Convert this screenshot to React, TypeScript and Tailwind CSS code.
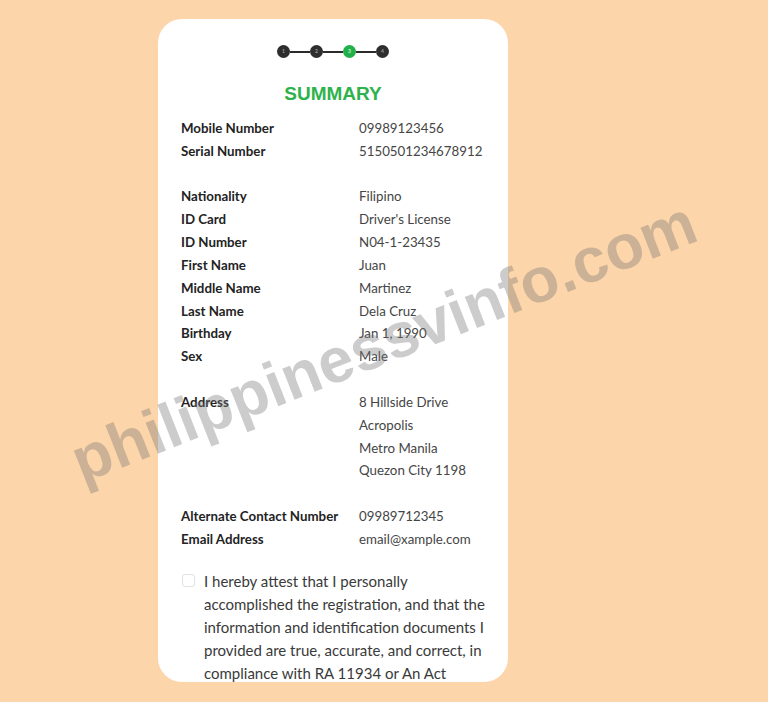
import { Fragment } from "react";

type Row = { label: string; value: string[] };

// blank rows are represented by null
const ROWS: (Row | null)[] = [
  { label: "Mobile Number", value: ["09989123456"] },
  { label: "Serial Number", value: ["5150501234678912"] },
  null,
  { label: "Nationality", value: ["Filipino"] },
  { label: "ID Card", value: ["Driver's License"] },
  { label: "ID Number", value: ["N04-1-23435"] },
  { label: "First Name", value: ["Juan"] },
  { label: "Middle Name", value: ["Martinez"] },
  { label: "Last Name", value: ["Dela Cruz"] },
  { label: "Birthday", value: ["Jan 1, 1990"] },
  { label: "Sex", value: ["Male"] },
  null,
  {
    label: "Address",
    value: ["8 Hillside Drive", "Acropolis", "Metro Manila", "Quezon City 1198"],
  },
  null,
  { label: "Alternate Contact Number", value: ["09989712345"] },
  { label: "Email Address", value: ["email@xample.com"] },
];

function Stepper() {
  const steps = [1, 2, 3, 4];
  return (
    <div className="flex items-center justify-center">
      {steps.map((s, i) => (
        <Fragment key={s}>
          {i > 0 && <div className="w-[20px] h-[2px] bg-[#2b2b2b]" />}
          <div
            className={
              "w-[13px] h-[13px] rounded-full flex items-center justify-center text-[5px] font-bold " +
              (s === 3 ? "bg-[#22b04a] text-[#c9f0d3]" : "bg-[#2e2e2e] text-[#9a9a9a]")
            }
          >
            {s}
          </div>
        </Fragment>
      ))}
    </div>
  );
}

export default function App() {
  return (
    <div
      className="relative h-[702px] w-full overflow-hidden bg-[#fdd5aa] pl-[158px] pt-[19px]"
      style={{ fontFamily: "Lato, 'Open Sans', sans-serif" }}
    >
      {/* Card */}
      <div className="w-[350px] h-[663px] bg-white rounded-[24px] overflow-hidden pt-[26px]">
        <Stepper />
        <h1
          className="mt-[24px] text-center text-[19px] leading-[24px] font-bold text-[#2eb24c]"
          style={{ fontFamily: "'Liberation Sans', Arial, sans-serif" }}
        >
          SUMMARY
        </h1>

        <div className="mt-[11px] pl-[23px] pr-[12px] grid grid-cols-[178px_1fr] text-[13.3px] leading-[22.83px]">
          {ROWS.map((row, i) =>
            row === null ? (
              <div key={i} className="col-span-2 h-[22.83px]" />
            ) : (
              <Fragment key={i}>
                <div className="font-bold text-[#232323]">{row.label}</div>
                <div className="text-[#454545]">
                  {row.value.map((v) => (
                    <div key={v}>{v}</div>
                  ))}
                </div>
              </Fragment>
            ),
          )}
        </div>

        {/* Attestation */}
        <div className="mt-[19px] pl-[24px] pr-[14px] flex gap-[9px]">
          <div className="mt-[4px] shrink-0 w-[13px] h-[13px] rounded-[3px] border border-[#e2e2e2] bg-white" />
          <p className="text-[15px] leading-[23px] text-[#3a3a3a]">
            I hereby attest that I personally accomplished the registration, and that the
            information and identification documents I provided are true, accurate, and
            correct, in compliance with RA 11934 or An Act
          </p>
        </div>
      </div>

      {/* Watermark */}
      <div className="pointer-events-none absolute inset-0 flex items-center justify-center">
        <div
          className="translate-x-[0px] translate-y-[-10px] rotate-[-21.5deg] text-[63px] font-bold text-[rgba(120,120,120,0.38)] whitespace-nowrap"
          style={{ fontFamily: "'Liberation Sans', Arial, sans-serif" }}
        >
          philippinessvinfo.com
        </div>
      </div>
    </div>
  );
}
